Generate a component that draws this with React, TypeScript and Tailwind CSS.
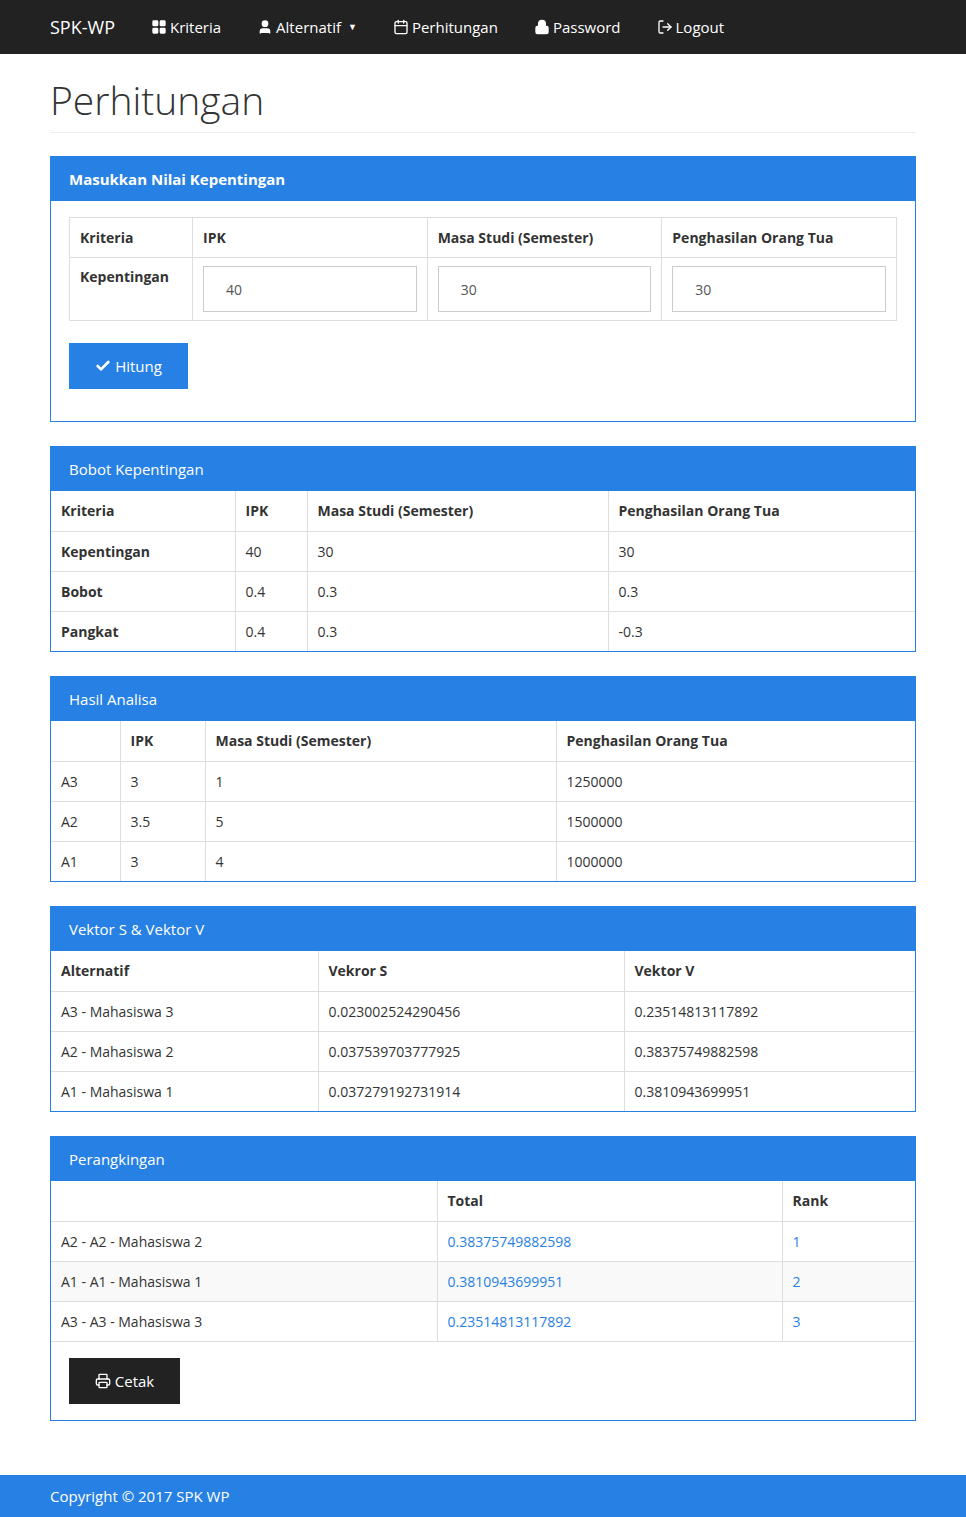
import { Check, Printer, LogOut, User, Lock, Calendar, LayoutGrid } from "lucide-react";

const font = { fontFamily: '"Open Sans", "Noto Sans", sans-serif' };

function Panel({ title, bold, children }: { title: string; bold?: boolean; children: React.ReactNode }) {
  return (
    <div className="border border-[#2780e3] bg-white mb-6">
      <div className={`bg-[#2780e3] text-white h-[44px] flex items-center px-[18px] text-[15px] ${bold ? "font-bold" : ""}`}>
        {title}
      </div>
      {children}
    </div>
  );
}

function Table({ head, rows, widths, boldFirst, stripe, link }: {
  head: string[]; rows: string[][]; widths: string[]; boldFirst?: boolean; stripe?: boolean; link?: boolean;
}) {
  return (
    <table className="w-full border-collapse text-[14px] text-[#333] table-fixed">
      <colgroup>{widths.map((w, i) => <col key={i} className={w} />)}</colgroup>
      <thead>
        <tr className="h-10">
          {head.map((h, i) => (
            <th key={i} className={`text-left font-bold px-[10px] ${i > 0 ? "border-l border-[#ddd]" : ""}`}>{h}</th>
          ))}
        </tr>
      </thead>
      <tbody>
        {rows.map((r, ri) => (
          <tr key={ri} className={`h-10 border-t border-[#ddd] ${stripe && ri % 2 === 1 ? "bg-[#f9f9f9]" : ""}`}>
            {r.map((c, i) => (
              <td key={i} className={`px-[10px] ${i > 0 ? "border-l border-[#ddd]" : ""} ${boldFirst && i === 0 ? "font-bold" : ""} ${link && i > 0 ? "text-[#2780e3]" : ""}`}>{c}</td>
            ))}
          </tr>
        ))}
      </tbody>
    </table>
  );
}

export default function App() {
  const nav = [
    { icon: <LayoutGrid className="w-4 h-4" fill="currentColor" />, label: "Kriteria" },
    { icon: <User className="w-4 h-4" fill="currentColor" />, label: "Alternatif", caret: true },
    { icon: <Calendar className="w-4 h-4" />, label: "Perhitungan" },
    { icon: <Lock className="w-4 h-4" fill="currentColor" />, label: "Password" },
    { icon: <LogOut className="w-4 h-4" />, label: "Logout" },
  ];
  return (
    <div style={font} className="bg-white">
      <nav className="bg-[#222] h-[54px] flex items-center px-[50px] text-white text-[15px]">
        <span className="text-[18px] mr-9">SPK-WP</span>
        <div className="flex gap-9">
          {nav.map((n) => (
            <span key={n.label} className="flex items-center gap-[3px]">
              {n.icon}{n.label}
              {n.caret && <span className="ml-1 text-[9px]">▼</span>}
            </span>
          ))}
        </div>
      </nav>
      <main className="px-[50px] pb-[30px]">
        <h1 className="text-[39px] leading-[52px] font-light text-[#333] pt-[20px] pb-[6px] border-b border-[#eee] mb-[23px]">Perhitungan</h1>

        <Panel title="Masukkan Nilai Kepentingan" bold>
          <div className="px-[18px] pt-4 pb-8">
            <table className="w-full border-collapse border border-[#ddd] text-[14px] text-[#333] table-fixed">
              <colgroup><col className="w-[123px]" /><col /><col /><col /></colgroup>
              <tbody>
                <tr className="h-10">
                  {["Kriteria", "IPK", "Masa Studi (Semester)", "Penghasilan Orang Tua"].map((h) => (
                    <th key={h} className="text-left px-[10px] border border-[#ddd]">{h}</th>
                  ))}
                </tr>
                <tr>
                  <td className="font-bold px-[10px] pt-2 align-top border border-[#ddd]">Kepentingan</td>
                  {["40", "30", "30"].map((v, i) => (
                    <td key={i} className="px-[10px] py-2 border border-[#ddd]">
                      <div className="h-[46px] border border-[#ccc] flex items-center px-[22px] text-[#555]">{v}</div>
                    </td>
                  ))}
                </tr>
              </tbody>
            </table>
            <button className="mt-[22px] bg-[#2780e3] text-white h-[46px] w-[119px] flex items-center justify-center gap-1 text-[15px]">
              <Check className="w-4 h-4" strokeWidth={4} />Hitung
            </button>
          </div>
        </Panel>

        <Panel title="Bobot Kepentingan">
          <Table widths={["w-[184px]", "w-[72px]", "w-[301px]", ""]} boldFirst
            head={["Kriteria", "IPK", "Masa Studi (Semester)", "Penghasilan Orang Tua"]}
            rows={[["Kepentingan", "40", "30", "30"], ["Bobot", "0.4", "0.3", "0.3"], ["Pangkat", "0.4", "0.3", "-0.3"]]} />
        </Panel>

        <Panel title="Hasil Analisa">
          <Table widths={["w-[69px]", "w-[85px]", "w-[351px]", ""]}
            head={["", "IPK", "Masa Studi (Semester)", "Penghasilan Orang Tua"]}
            rows={[["A3", "3", "1", "1250000"], ["A2", "3.5", "5", "1500000"], ["A1", "3", "4", "1000000"]]} />
        </Panel>

        <Panel title="Vektor S & Vektor V">
          <Table widths={["w-[267px]", "w-[306px]", ""]}
            head={["Alternatif", "Vekror S", "Vektor V"]}
            rows={[
              ["A3 - Mahasiswa 3", "0.023002524290456", "0.23514813117892"],
              ["A2 - Mahasiswa 2", "0.037539703777925", "0.38375749882598"],
              ["A1 - Mahasiswa 1", "0.037279192731914", "0.3810943699951"],
            ]} />
        </Panel>

        <Panel title="Perangkingan">
          <Table widths={["w-[386px]", "w-[345px]", ""]} stripe link
            head={["", "Total", "Rank"]}
            rows={[
              ["A2 - A2 - Mahasiswa 2", "0.38375749882598", "1"],
              ["A1 - A1 - Mahasiswa 1", "0.3810943699951", "2"],
              ["A3 - A3 - Mahasiswa 3", "0.23514813117892", "3"],
            ]} />
          <div className="border-t border-[#ddd] px-[18px] pt-4 pb-4">
            <button className="bg-[#222] text-white h-[46px] w-[111px] flex items-center justify-center gap-1 text-[15px]">
              <Printer className="w-4 h-4" />Cetak
            </button>
          </div>
        </Panel>
      </main>
      <footer className="bg-[#2780e3] text-white h-[43px] flex items-center px-[50px] text-[15px]">
        Copyright © 2017 SPK WP
      </footer>
    </div>
  );
}
